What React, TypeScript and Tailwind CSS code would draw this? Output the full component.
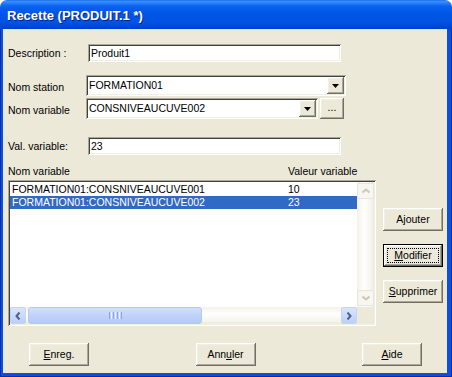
import React from 'react';

const raised =
  'bg-[#ece9d8] shadow-[inset_-1px_-1px_#716f64,inset_1px_1px_#ffffff,inset_-2px_-2px_#aca899,inset_2px_2px_#f1efe2]';
const sunken =
  'bg-white shadow-[inset_1px_1px_#aca899,inset_-1px_-1px_#ffffff,inset_2px_2px_#404040,inset_-2px_-2px_#f1efe2]';

function Button({ children, def = false }: { children: React.ReactNode; def?: boolean }) {
  if (def) {
    return (
      <div className="w-[60px] h-[23px] border border-black">
        <div className={`${raised} w-full h-full p-[3px]`}>
          <div className="w-full h-full border border-dotted border-black flex items-center justify-center">
            {children}
          </div>
        </div>
      </div>
    );
  }
  return (
    <div className={`${raised} w-[60px] h-[23px] flex items-center justify-center`}>{children}</div>
  );
}

function DropArrow() {
  return (
    <div className={`${raised} w-[17px] h-full flex items-center justify-center`}>
      <svg width="7" height="4" viewBox="0 0 7 4">
        <polygon points="0,0 7,0 3.5,4" fill="#000" />
      </svg>
    </div>
  );
}

function BlueArrow({ dir }: { dir: 'left' | 'right' }) {
  return (
    <div className="w-[16px] h-[17px] rounded-[2px] border border-[#c3d3fd] bg-[linear-gradient(to_bottom,#d9e4fe,#bccefb)] flex items-center justify-center">
      <svg width="6" height="8" viewBox="0 0 6 8">
        <polyline
          points={dir === 'left' ? '4.5,0.5 1.5,4 4.5,7.5' : '1.5,0.5 4.5,4 1.5,7.5'}
          fill="none"
          stroke="#4d6185"
          strokeWidth="2"
        />
      </svg>
    </div>
  );
}

function PaleArrow({ dir }: { dir: 'up' | 'down' }) {
  return (
    <div className="w-[17px] h-[16px] rounded-[2px] border border-[#e8e6dc] bg-[#f7f6f0] flex items-center justify-center">
      <svg width="8" height="6" viewBox="0 0 8 6">
        <polyline
          points={dir === 'up' ? '0.5,4.5 4,1.5 7.5,4.5' : '0.5,1.5 4,4.5 7.5,1.5'}
          fill="none"
          stroke="#cbc8bb"
          strokeWidth="2"
        />
      </svg>
    </div>
  );
}

const rows = [
  { name: 'FORMATION01:CONSNIVEAUCUVE001', value: '10', sel: false },
  { name: 'FORMATION01:CONSNIVEAUCUVE002', value: '23', sel: true },
];

export default function App() {
  return (
    <div className="w-[452px] h-[377px] flex flex-col bg-white font-['Liberation_Sans',Arial,sans-serif] text-[10.5px] text-black leading-none select-none">
      {/* Title bar */}
      <div className="h-[29px] shrink-0 rounded-t-[7px] bg-[linear-gradient(to_bottom,#0a5ee8_0px,#3d94fd_1px,#2a80fb_3px,#0a62f0_6px,#0055e5_14px,#0053e3_22px,#0046d6_27px,#003cc2_29px)] flex items-center pl-[7px] pt-[1px]">
        <span className="text-white font-bold text-[13px] [text-shadow:1px_1px_#0a1e8c]">
          Recette (PRODUIT.1 *)
        </span>
      </div>

      {/* Window frame */}
      <div className="flex-1 flex bg-[#0a50df] border-x border-b border-[#0030b0] pl-[2px] pr-[4px] pb-[3px]">
        <div className="flex-1 bg-[#ece9d8] flex flex-col pl-[5px]">
          {/* Description */}
          <div className="mt-[15px] h-[18px] flex items-center">
            <span className="w-[80px]">Description :</span>
            <div className={`${sunken} w-[253px] h-full flex items-center pl-[3px]`}>Produit1</div>
          </div>

          {/* Nom station */}
          <div className="mt-[13px] h-[21px] flex items-center">
            <span className="w-[78px] pt-[3px]">Nom station</span>
            <div className={`${sunken} w-[260px] h-full flex items-center p-[2px]`}>
              <span className="flex-1 pl-[1px]">FORMATION01</span>
              <DropArrow />
            </div>
          </div>

          {/* Nom variable */}
          <div className="mt-[2px] h-[21px] flex items-center">
            <span className="w-[78px] pt-[3px]">Nom variable</span>
            <div className={`${sunken} w-[232px] h-full flex items-center p-[2px]`}>
              <span className="flex-1 pl-[1px]">CONSNIVEAUCUVE002</span>
              <DropArrow />
            </div>
            <div className={`${raised} ml-[2px] w-[24px] h-full flex items-center justify-center pb-[2px]`}>...</div>
          </div>

          {/* Val. variable */}
          <div className="mt-[18px] h-[18px] flex items-center">
            <span className="w-[80px]">Val. variable:</span>
            <div className={`${sunken} w-[253px] h-full flex items-center pl-[3px]`}>23</div>
          </div>

          {/* Column headers */}
          <div className="mt-[10px] h-[13px] flex items-center">
            <span className="w-[280px]">Nom variable</span>
            <span>Valeur variable</span>
          </div>

          {/* List + side buttons */}
          <div className="mt-[2px] flex">
            <div className={`${sunken} w-[368px] h-[146px] p-[2px] flex flex-col`}>
              <div className="flex-1 flex min-h-0">
                <div className="flex-1 pt-[1px]">
                  {rows.map((r) => (
                    <div
                      key={r.name}
                      className={`h-[13px] flex items-center pl-[2px] ${r.sel ? 'bg-[#316ac5] text-white' : ''}`}
                    >
                      <span className="w-[276px]">{r.name}</span>
                      <span>{r.value}</span>
                    </div>
                  ))}
                </div>
                {/* vertical scrollbar (disabled) */}
                <div className="w-[17px] flex flex-col justify-between bg-[linear-gradient(to_right,#f3f1e7,#fefefd_40%,#f6f5ef_80%,#ebe9df)] py-[1px]">
                  <PaleArrow dir="up" />
                  <PaleArrow dir="down" />
                </div>
              </div>
              <div className="h-[17px] flex">
                {/* horizontal scrollbar */}
                <div className="flex-1 flex items-center bg-[linear-gradient(to_bottom,#f3f1e7,#fefefd_40%,#f6f5ef_80%,#ebe9df)]">
                  <BlueArrow dir="left" />
                  <div className="ml-[2px] w-[174px] h-[17px] rounded-[3px] border border-[#b4c8f6] bg-[linear-gradient(to_bottom,#d3e0fe,#c0d2fb_50%,#b6caf7)] flex items-center justify-center gap-[1px]">
                    <span className="w-[1px] h-[7px] bg-[#8ba5e8]" />
                    <span className="w-[1px] h-[7px] bg-[#eef3ff]" />
                    <span className="w-[1px] h-[7px] bg-[#8ba5e8]" />
                    <span className="w-[1px] h-[7px] bg-[#eef3ff]" />
                    <span className="w-[1px] h-[7px] bg-[#8ba5e8]" />
                    <span className="w-[1px] h-[7px] bg-[#eef3ff]" />
                    <span className="w-[1px] h-[7px] bg-[#8ba5e8]" />
                  </div>
                  <div className="flex-1" />
                  <BlueArrow dir="right" />
                </div>
                <div className="w-[17px] bg-[#ece9d8]" />
              </div>
            </div>

            <div className="ml-[7px] pt-[28px] flex flex-col gap-[13px]">
              <Button>Ajouter</Button>
              <Button def>
                <span>
                  <u>M</u>odifier
                </span>
              </Button>
              <Button>
                <span>
                  <u>S</u>upprimer
                </span>
              </Button>
            </div>
          </div>

          {/* Bottom buttons */}
          <div className="mt-[17px] flex justify-between pl-[21px] pr-[25px]">
            <Button>
              <span>
                <u>E</u>nreg.
              </span>
            </Button>
            <Button>
              <span>
                Ann<u>u</u>ler
              </span>
            </Button>
            <Button>
              <span>
                <u>A</u>ide
              </span>
            </Button>
          </div>
        </div>
      </div>
    </div>
  );
}
